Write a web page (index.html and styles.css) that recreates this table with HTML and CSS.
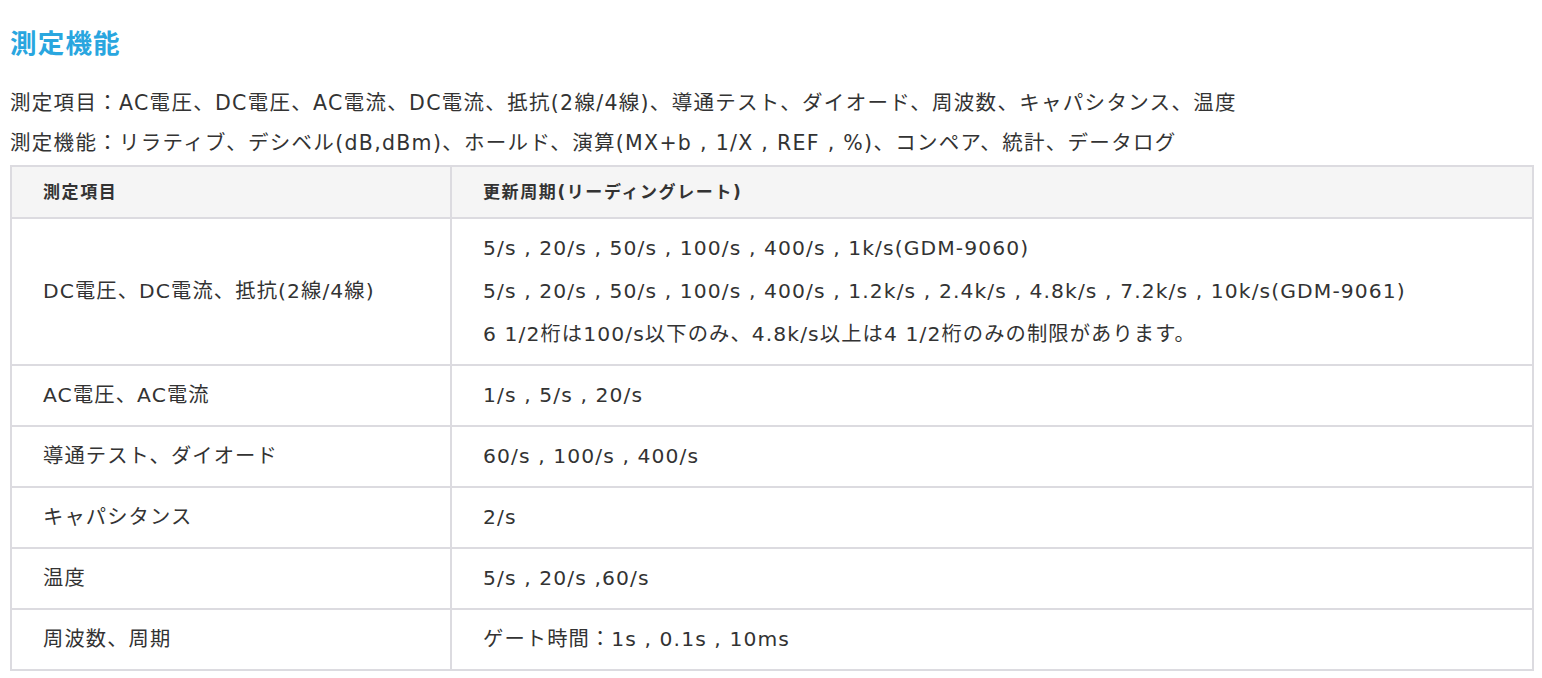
FILE: index.html
```html
<!DOCTYPE html>
<html lang="ja">
<head>
<meta charset="utf-8">
<link rel="stylesheet" href="styles.css">
</head>
<body>
<section class="spec">
  <h2 class="spec-title">測定機能</h2>
  <div class="spec-lines">
    <p>測定項目：AC電圧、DC電圧、AC電流、DC電流、抵抗(2線/4線)、導通テスト、ダイオード、周波数、キャパシタンス、温度</p>
    <p>測定機能：リラティブ、デシベル(dB,dBm)、ホールド、演算(MX+b , 1/X , REF , %)、コンペア、統計、データログ</p>
  </div>
  <table class="spec-table">
    <thead>
      <tr><th class="col-item">測定項目</th><th>更新周期(リーディングレート)</th></tr>
    </thead>
    <tbody>
      <tr>
        <td>DC電圧、DC電流、抵抗(2線/4線)</td>
        <td>
          <div class="line">5/s , 20/s , 50/s , 100/s , 400/s , 1k/s(GDM-9060)</div>
          <div class="line">5/s , 20/s , 50/s , 100/s , 400/s , 1.2k/s , 2.4k/s , 4.8k/s , 7.2k/s , 10k/s(GDM-9061)</div>
          <div class="line">6 1/2桁は100/s以下のみ、4.8k/s以上は4 1/2桁のみの制限があります。</div>
        </td>
      </tr>
      <tr><td>AC電圧、AC電流</td><td><div class="line">1/s , 5/s , 20/s</div></td></tr>
      <tr><td>導通テスト、ダイオード</td><td><div class="line">60/s , 100/s , 400/s</div></td></tr>
      <tr><td>キャパシタンス</td><td><div class="line">2/s</div></td></tr>
      <tr><td>温度</td><td><div class="line">5/s , 20/s ,60/s</div></td></tr>
      <tr><td>周波数、周期</td><td><div class="line">ゲート時間：1s , 0.1s , 10ms</div></td></tr>
    </tbody>
  </table>
</section>
</body>
</html>
```
FILE: styles.css
```css
html, body {
  margin: 0;
  padding: 0;
  background: #ffffff;
}
body {
  font-family: "DejaVu Sans", "Noto Sans CJK JP", sans-serif;
  color: #333333;
}
.spec {
  padding: 25px 8px 0 10px;
}
.spec-title {
  margin: 0;
  font-family: "Noto Sans CJK JP", sans-serif;
  font-size: 26.5px;
  letter-spacing: 1.2px;
  line-height: 34px;
  font-weight: 700;
  color: #29a6df;
}
.spec-lines {
  margin-top: 24px;
}
.spec-lines p {
  margin: 0;
  font-size: 20.5px;
  letter-spacing: 1.3px;
  line-height: 40px;
}
.spec-table {
  margin-top: 2px;
  width: 1524px;
  border-collapse: collapse;
  border: 2px solid #dcdbe0;
}
.spec-table th,
.spec-table td {
  border: 2px solid #dcdbe0;
  text-align: left;
  vertical-align: middle;
  padding: 8px 31px;
}
.spec-table th {
  background: #f5f5f5;
  font-size: 17px;
  letter-spacing: 1.6px;
  font-weight: 700;
  line-height: 34px;
}
.spec-table .col-item {
  width: 376px;
}
.spec-table td {
  font-size: 20.3px;
  letter-spacing: 1.1px;
  line-height: 43px;
}
.line {
  white-space: nowrap;
}
```
